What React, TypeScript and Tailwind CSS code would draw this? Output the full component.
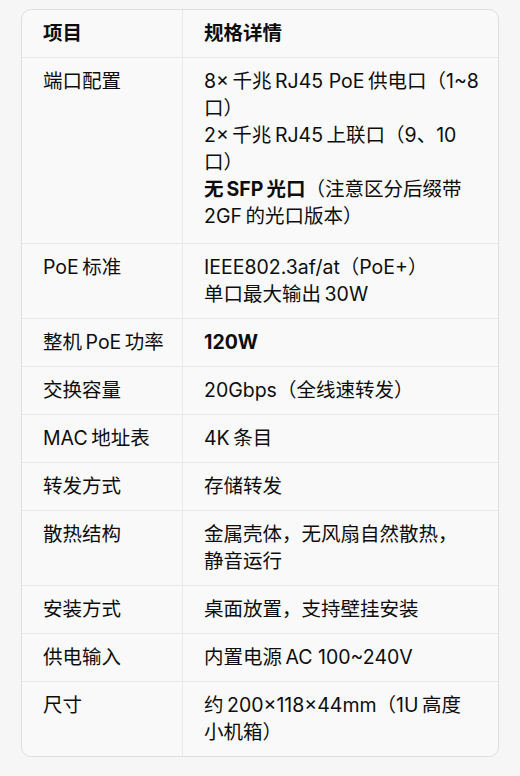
import React from 'react';

type Row = { label: string; lines: React.ReactNode[]; extra?: string };

// thin space, like the auto-spacing between CJK and latin in the shot
const s = '\u2009';

const ROWS: Row[] = [
  {
    label: '端口配置',
    extra: 'pb-[13px]',
    lines: [
      `8×${s}千兆${s}RJ45 PoE${s}供电口（1~8`,
      '口）',
      `2×${s}千兆${s}RJ45${s}上联口（9、10`,
      '口）',
      <>
        <span className="font-bold">{`无${s}SFP${s}光口`}</span>（注意区分后缀带
      </>,
      `2GF${s}的光口版本）`,
    ],
  },
  { label: `PoE${s}标准`, lines: ['IEEE802.3af/at（PoE+）', `单口最大输出${s}30W`] },
  { label: `整机${s}PoE${s}功率`, lines: [<span className="font-bold">120W</span>] },
  { label: '交换容量', lines: ['20Gbps（全线速转发）'] },
  { label: `MAC${s}地址表`, lines: [`4K${s}条目`] },
  { label: '转发方式', lines: ['存储转发'] },
  { label: '散热结构', lines: ['金属壳体，无风扇自然散热，', '静音运行'] },
  { label: '安装方式', lines: ['桌面放置，支持壁挂安装'] },
  { label: '供电输入', lines: [`内置电源${s}AC 100~240V`] },
  { label: '尺寸', lines: [`约${s}200×118×44mm（1U${s}高度`, '小机箱）'] },
];

export default function App() {
  return (
    <div
      className="min-h-[776px] w-[520px] bg-[#f6f6f6] pt-[9px] text-[#0d0d0d]"
      style={{ fontFamily: 'Inter, "Noto Sans CJK SC", sans-serif' }}
    >
      <div className="mx-[21px] overflow-hidden rounded-[10px] border border-[#dedede] bg-[#f9f9f9] text-[19.5px] leading-[27px]">
        <div className="flex border-b border-[#e6e6e6] font-bold">
          <div className="w-[161px] shrink-0 border-r border-[#e9e9e9] px-[21px] py-[10px]">项目</div>
          <div className="flex-1 px-[21px] py-[10px]">规格详情</div>
        </div>
        {ROWS.map((r, i) => (
          <div
            key={r.label}
            className={`flex ${i < ROWS.length - 1 ? 'border-b border-[#e6e6e6]' : ''}`}
          >
            <div className="w-[161px] shrink-0 whitespace-nowrap border-r border-[#e9e9e9] px-[21px] py-[10px]">
              {r.label}
            </div>
            <div className={`flex-1 px-[21px] py-[10px] ${r.extra ?? ''}`}>
              {r.lines.map((l, j) => (
                <div key={j} className="whitespace-nowrap">
                  {l}
                </div>
              ))}
            </div>
          </div>
        ))}
      </div>
    </div>
  );
}
